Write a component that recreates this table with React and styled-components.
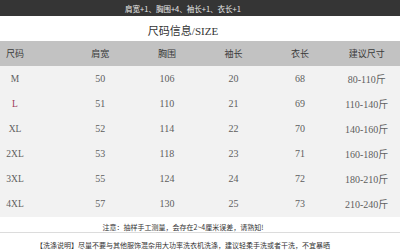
import React from 'react'
import styled, { createGlobalStyle } from 'styled-components'

const GlobalStyle = createGlobalStyle`
body {
  margin: 0;
  background: #fff;
}
`

const Page = styled.div`
width: 400px;
height: 252px;
overflow: hidden;
font-family: "Noto Sans CJK SC", sans-serif;
`

const TopBar = styled.div`
height: 16px;
background: #353535;
color: #e8e8e8;
font-size: 7.5px;
display: flex;
align-items: center;
justify-content: center;
padding-right: 34px;
`

const Title = styled.div`
height: 25px;
display: flex;
align-items: center;
justify-content: center;
padding-right: 34px;
padding-top: 2px;
box-sizing: border-box;
color: #333;
font-size: 11px;
font-family: "Liberation Serif", "Noto Sans CJK SC", serif;
`

const Row = styled.div`
display: grid;
grid-template-columns: 67px repeat(5, 1fr);
align-items: center;
height: 25px;
background: ${({ head }) => (head ? '#c2c2c2' : 'transparent')};
color: ${({ head }) => (head ? '#3a3a3a' : '#5e5e5e')};
font-size: ${({ head }) => (head ? '9px' : '10px')};
font-family: ${({ head }) => (head ? '"Noto Sans CJK SC", sans-serif' : '"Liberation Serif", "Noto Sans CJK SC", serif')};
`

const Body = styled.div`
background: #f2f2f2;
padding-bottom: 1px;
`

const Cell = styled.div`
text-align: center;
`

const SizeCell = styled.div`
width: 30px;
text-align: center;
font-size: ${({ head }) => (head ? '9px' : '9.5px')};
color: ${({ red }) => (red ? '#9c3b5c' : 'inherit')};
`

const Note = styled.div`
height: 15px;
display: flex;
align-items: flex-end;
justify-content: center;
padding-right: 34px;
font-size: 7px;
color: #333;
border-bottom: 1px solid #dcdcdc;
`

const Wash = styled.div`
height: 19px;
display: flex;
align-items: center;
justify-content: center;
padding-right: 34px;
padding-top: 4px;
box-sizing: border-box;
font-size: 7px;
color: #333;
white-space: nowrap;
`

const heads = ['尺码', '肩宽', '胸围', '袖长', '衣长', '建议尺寸']

const data = [
  ['M', 50, 106, 20, 68, '80-110斤'],
  ['L', 51, 110, 21, 69, '110-140斤'],
  ['XL', 52, 114, 22, 70, '140-160斤'],
  ['2XL', 53, 118, 23, 71, '160-180斤'],
  ['3XL', 55, 124, 24, 72, '180-210斤'],
  ['4XL', 57, 130, 25, 73, '210-240斤'],
]

export default function App() {
  return (
    <Page>
      <GlobalStyle />
      <TopBar>肩宽+1、胸围+4、袖长+1、衣长+1</TopBar>
      <Title>尺码信息/SIZE</Title>
      <Row head>
        <SizeCell head>{heads[0]}</SizeCell>
        {heads.slice(1).map((h) => (
          <Cell key={h}>{h}</Cell>
        ))}
      </Row>
      <Body>
        {data.map((item) => (
          <Row key={item[0]}>
            <SizeCell red={item[0] === 'L'}>{item[0]}</SizeCell>
            {item.slice(1).map((v, i) => (
              <Cell key={i}>{v}</Cell>
            ))}
          </Row>
        ))}
      </Body>
      <Note>注意：抽样手工测量，会存在2~4厘米误差，请熟知!</Note>
      <Wash>【洗涤说明】尽量不要与其他服饰混杂用大功率洗衣机洗涤，建议轻柔手洗或者干洗，不宜暴晒</Wash>
    </Page>
  )
}
